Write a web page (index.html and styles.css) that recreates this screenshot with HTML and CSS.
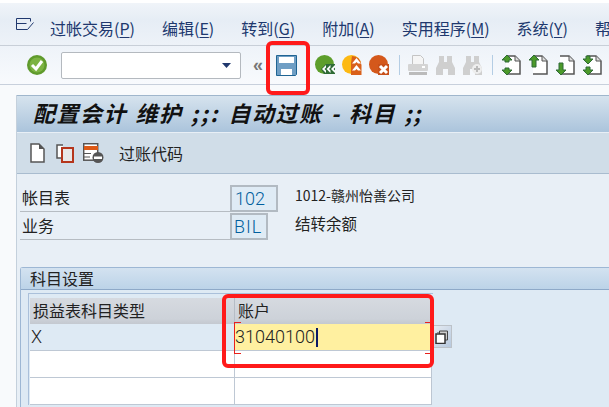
FILE: index.html
```html
<!DOCTYPE html>
<html lang="zh">
<head>
<meta charset="utf-8">
<title>配置会计 维护</title>
<link rel="stylesheet" href="styles.css">
</head>
<body>
<div class="page">
  <nav class="menubar">
    <svg class="menu-icon" width="18" height="13" viewBox="0 0 18 13"><path d="M.5.500h14v3M.5.500v11h6M.5 5.500h10M17.500 4.500l-6 7H6" fill="none" stroke="#20386e" stroke-width="1"/></svg>
    <span class="mi m1">过帐交易(<u>P</u>)</span>
    <span class="mi">编辑(<u>E</u>)</span>
    <span class="mi">转到(<u>G</u>)</span>
    <span class="mi">附加(<u>A</u>)</span>
    <span class="mi">实用程序(<u>M</u>)</span>
    <span class="mi">系统(<u>Y</u>)</span>
    <span class="mi">帮</span>
  </nav>
  <div class="toolbar">
    <svg class="ic ok" width="20" height="20" viewBox="0 0 20 20"><circle cx="10" cy="10" r="10" fill="#5f9a2c"/><circle cx="10" cy="10" r="7.500" fill="#7cb342"/><path d="M5 10l4 4 6-8" fill="none" stroke="#fff" stroke-width="3"/></svg>
    <div class="cmd"><svg width="9" height="5" viewBox="0 0 9 5"><path d="M0 0h9L4.500 5z" fill="#20386e"/></svg></div>
    <span class="chev">«</span>
    <svg class="ic save" width="21" height="21" viewBox="0 0 21 21"><path d="M.5.5h20v19l-1 1H.5z" fill="#6f9ec4" stroke="#1f6493"/><rect x="3" y="2" width="15" height="6" fill="#fff"/><rect x="5" y="14" width="11" height="6" fill="#fff"/></svg>
    <svg class="ic nav1" width="20" height="20" viewBox="0 0 20 20"><circle cx="9.500" cy="9.500" r="9.500" fill="#5d9e2b"/><path d="M6 14l5-5h9v10H9z" fill="#2f6b36"/><path d="M7 14l4-4v2.500L9.500 14l1.500 1.500V18zM11.500 14l4-4v2.500L14 14l1.500 1.500V18zM16 14l4-4v2.500L18.500 14l1.500 1.500V18z" fill="#fff"/></svg>
    <svg class="ic nav2" width="20" height="20" viewBox="0 0 20 20"><circle cx="9.500" cy="9.500" r="9.500" fill="#fdb913"/><path d="M10 1a9.500 9.500 0 0 1 9.500 9V20H9V8z" fill="#d9601a"/><path d="M14.500 3l4.500 5.500h-3L14.500 7 13 8.500h-3zM14.500 10l4.500 5.500h-3L14.500 14 13 15.500h-3z" fill="#fff"/></svg>
    <svg class="ic nav3" width="20" height="20" viewBox="0 0 20 20"><circle cx="9.500" cy="9.500" r="9.500" fill="#d4581b"/><path d="M9 9h11v11H9z" fill="#c8501a"/><path d="M11 11l7 7M18 11l-7 7" stroke="#fff" stroke-width="3"/></svg>
    <i class="sep s1"></i>
    <svg class="ic print" width="20" height="20" viewBox="0 0 20 20"><path d="M4.500.500h8l3 3v6h-11z" fill="#f5f5f5" stroke="#c4c4c4"/><rect y="9" width="20" height="7" rx="1" fill="#d4d4d4"/><rect x="14" y="11" width="3" height="2" fill="#fff"/><rect x="1" y="17" width="18" height="3" fill="#bbb"/></svg>
    <svg class="ic find" width="19" height="20" viewBox="0 0 19 20"><path d="M3 1h5v6h3V1h5v6l3 6v7h-7v-6H7v6H0v-7l3-6z" fill="#cfcfcf"/></svg>
    <svg class="ic find2" width="19" height="20" viewBox="0 0 19 20"><path d="M3 1h5v6h3V1h5v6l3 6v7h-7v-6H7v6H0v-7l3-6z" fill="#cfcfcf"/><circle cx="14" cy="14" r="5" fill="#eee"/><path d="M14 11v6M11 14h6" stroke="#bbb" stroke-width="2"/></svg>
    <i class="sep s2"></i>
    <svg class="ic pg1" width="20" height="20" viewBox="0 0 20 20"><use href="#doc"/><path d="M6 0l5 5H8v2H4V5H1zM6 20l5-5H8v-2H4v2H1z" fill="#4c9a2a" stroke="#2f6b36"/></svg>
    <svg class="ic pg2" width="20" height="20" viewBox="0 0 20 20"><use href="#doc"/><path d="M6 0l5 5H8v7H4V5H1z" fill="#4c9a2a" stroke="#2f6b36"/></svg>
    <svg class="ic pg3" width="20" height="20" viewBox="0 0 20 20"><use href="#doc"/><path d="M6 20l5-5H8V8H4v7H1z" fill="#4c9a2a" stroke="#2f6b36"/></svg>
    <svg class="ic pg4" width="20" height="20" viewBox="0 0 20 20"><use href="#doc"/><path d="M6 9l5-5H8V1H4v3H1zM6 20l5-5H8v-3H4v3H1z" fill="#4c9a2a" stroke="#2f6b36"/></svg>
    <svg width="0" height="0" class="defs"><defs><g id="doc"><path d="M5 1h9l5 5v13H5" fill="#fff" stroke="#555" stroke-width="1.500"/><path d="M14 1v5h5" fill="#ddd" stroke="#555"/></g></defs></svg>
  </div>
  <main class="panel">
    <h1 class="title">配置会计 维护 <span class="semi">;;:</span> 自动过账 - 科目 ;;</h1>
    <div class="apptools">
      <svg class="doc" width="15" height="20" viewBox="0 0 15 20"><path d="M1 1h8l5 5v13H1z" fill="#fff" stroke="#555" stroke-width="1.500"/><path d="M9 1v5h5" fill="#555"/></svg>
      <svg class="copy" width="18" height="19" viewBox="0 0 18 19"><path d="M7 1H1v13h4" fill="#fff" stroke="#555" stroke-width="1.500"/><rect x="6" y="4" width="11" height="14" fill="#e8e8e8" stroke="#b5361c" stroke-width="2"/></svg>
      <svg class="del" width="21" height="20" viewBox="0 0 21 20"><rect x=".7" y=".7" width="14" height="16.500" fill="#fff" stroke="#555" stroke-width="1.500"/><rect x="1" y="3" width="14" height="4" fill="#dd5a17"/><path d="M1 10.500h7M1 14h6" stroke="#555"/><circle cx="15" cy="14.500" r="5.500" fill="#555"/><rect x="11" y="13.500" width="8" height="2.500" fill="#fff"/></svg>
      <span class="tool-text">过账代码</span>
    </div>
    <section class="fields">
      <div class="frow">
        <label class="flabel">帐目表</label>
        <span class="box wide">102</span>
        <span class="fval small">1012-赣州怡善公司</span>
      </div>
      <div class="frow">
        <label class="flabel">业务</label>
        <span class="box">BIL</span>
        <span class="fval">结转余额</span>
      </div>
    </section>
    <section class="group">
      <h2 class="ghead">科目设置</h2>
      <div class="gbody">
        <div class="tablewrap">
          <div class="table">
            <div class="thead"><span class="c1">损益表科目类型</span><span class="c2">账户</span></div>
            <div class="tr active"><span class="c1 x">X</span><span class="c2 yellow">31040100<i class="caret"></i></span></div>
            <div class="tr"><span class="c1"></span><span class="c2"></span></div>
            <div class="tr"><span class="c1"></span><span class="c2"></span></div>
          </div>
          <div class="f4"><svg width="13" height="14" viewBox="0 0 13 14"><path d="M4.500 4V1h8v9H9" fill="#ccc" stroke="#444"/><path d="M3 3V2" stroke="#444"/><rect x="1" y="4" width="9" height="9.500" fill="#fff" stroke="#333" stroke-width="1.500"/></svg></div>
        </div>
      </div>
    </section>
  </main>
  <div class="mark mark-save"></div>
  <div class="mark mark-acct"></div>
</div>
</body>
</html>
```
FILE: styles.css
```css
* { box-sizing: border-box; }
html, body { margin: 0; padding: 0; }
body {
  width: 609px; height: 407px; overflow: hidden;
  font-family: "Noto Sans CJK SC", "Liberation Sans", sans-serif;
  color: #222;
  background: #f8fafc;
}
.page { position: relative; width: 609px; height: 407px; overflow: hidden; }
u { text-underline-offset: 2px; }

.menubar {
  height: 46px; display: flex; align-items: flex-start; gap: 27px;
  padding: 14px 0 0 16px;
  border-top: 3px solid #fff;
  border-bottom: 1px solid #c8cfd8;
  background: linear-gradient(#f0f4f9, #e6edf5 40%, #edf2f8);
  color: #20386e; font-size: 16px; line-height: 22px;
  white-space: nowrap; overflow: hidden;
}
.menu-icon { flex: none; margin-top: 1px; }
.mi { flex: none; }
.m1 { margin-left: -11px; }

.toolbar {
  height: 39px; display: flex; align-items: center;
  padding-left: 27px;
  border-bottom: 1px solid #c8d0dc;
  background: linear-gradient(#eef3f9, #f8fafd);
}
.defs { position: absolute; }
.ic { flex: none; display: block; }
.ok { margin-right: 14px; }
.cmd {
  flex: none; width: 180px; height: 27px; background: #fff;
  border: 1px solid #b4b9bf; border-radius: 2px;
  display: flex; align-items: center; justify-content: flex-end; padding-right: 9px;
}
.chev { flex: none; width: 14px; margin-left: 12px; color: #777; font: bold 18px/18px "Liberation Sans", sans-serif; }
.save { margin-left: 9px; }
.nav1 { margin-left: 18px; }
.nav2 { margin-left: 7px; }
.nav3 { margin-left: 7px; }
.sep { flex: none; width: 1px; height: 20px; background: #b4cde4; }
.s1 { margin-left: 10px; }
.print { margin-left: 8px; }
.find { margin-left: 8px; }
.find2 { margin-left: 8px; }
.s2 { margin-left: 10px; }
.pg1 { margin-left: 8px; }
.pg2 { margin-left: 7px; }
.pg3 { margin-left: 7px; }
.pg4 { margin-left: 7px; }

.panel {
  position: absolute; left: 16px; top: 95px; width: 593px; height: 312px;
  background: #e8eff6;
  border-left: 1px solid #c4d0dc;
}
.title {
  margin: 0; height: 37px; padding-left: 16px;
  background: linear-gradient(#d6e3ee, #abc4dc);
  border-top: 1px solid #9fb6cc;
  font-size: 22px; line-height: 33px; font-weight: 700; font-style: italic;
  letter-spacing: 1.500px; word-spacing: 2px;
  color: #111; white-space: nowrap;
}
.semi { letter-spacing: 2.500px; }
.apptools {
  height: 41px; margin-top: 1px; display: flex; align-items: center;
  padding-left: 13px;
  background: #d0dde8;
  border-bottom: 1px solid #a9bccf;
}
.doc, .copy, .del { flex: none; }
.copy { margin-left: 11px; }
.del { margin-left: 9px; }
.tool-text { margin-left: 15px; font-size: 16px; color: #222; }

.fields { padding: 10px 0 0 3px; }
.frow {
  position: relative; height: 28px; display: flex; align-items: center;
  font-size: 16px;
}
.flabel {
  width: 210px; height: 27px; line-height: 25px;
  padding-left: 2px; border-bottom: 1px solid #b6bcc2;
  flex: none;
}
.box {
  flex: none; width: 38px; height: 27px;
  border: 2px solid #b2bac2; background: #dfebf5;
  color: #005f9e; font: 300 18px/23px Roboto, "Liberation Sans", sans-serif; letter-spacing: 1px;
  padding-left: 2px;
}
.box.wide { width: 48px; padding-left: 3px; letter-spacing: 0; }
.fval { position: absolute; left: 275px; top: -2px; line-height: 26px; font-size: 15.500px; color: #222; }
.fval.small { font-size: 14px; }

.group {
  margin: 27px 0 0 3px; border: 1px solid #9db7d4; border-right: 0; border-bottom: 0;
  border-radius: 3px 0 0 0;
}
.ghead {
  margin: 0; height: 22px; padding-left: 9px;
  background: linear-gradient(#d3e2f0, #bcd3e8);
  border-bottom: 1px solid #8ea9c8;
  font-size: 16px; line-height: 20px; font-weight: 400; color: #222;
}
.gbody { height: 120px; background: #deeaf4; padding: 3px 0 0 7px; }
.tablewrap { position: relative; width: 405px; border: 1px solid #aac0da; border-bottom: 0; border-right: 0; padding: 4px 0 0 1px; }
.table { width: 402px; border-right: 1px solid #bcc6d2; }
.thead {
  display: flex; height: 26px;
  background: linear-gradient(#d6dae0, #cdd2d9 80%, #c4c9d0);
  font-size: 16px; line-height: 25px; color: #222;
}
.thead .c1 { width: 205px; padding-left: 3px; border-right: 1px solid #b6bdc6; }
.thead .c2 { padding-left: 3px; }
.tr { display: flex; height: 27px; background: #fff; border-bottom: 1px solid #bec8d4; }
.tr .c1 { width: 205px; border-right: 1px solid #bec8d4; }
.tr .c2 { flex: 1; }
.tr.active { background: #deeaf4; }
.x { font: 300 18px/26px Roboto, "Liberation Sans", sans-serif; padding-left: 1px; color: #222; }
.yellow {
  position: relative;
  background: #fff0a0; font: 300 18px/26px Roboto, "Liberation Sans", sans-serif; color: #222;
  display: block; height: 26px;
}
.yellow::before, .yellow::after {
  content: ""; position: absolute; top: -2px; width: 6px; height: 30px;
  border: 1px solid #e8201c; border-width: 1px 0;
}
.yellow::before { left: -1px; border-left-width: 1px; }
.yellow::after { right: 0; }
.caret { display: inline-block; width: 2px; height: 19px; background: #0a1a66; vertical-align: -4px; margin-left: 1px; }
.f4 {
  position: absolute; left: 403px; top: 31px; width: 20px; height: 23px;
  background: linear-gradient(135deg, #e8edf3, #b7c9de);
  border: 1px solid #bcc2c8; border-left: 0;
  display: flex; align-items: center; justify-content: center;
}

.mark { position: absolute; border: 4px solid #ff1a1a; border-radius: 6px; }
.mark-save { left: 266px; top: 41px; width: 44px; height: 54px; }
.mark-acct { left: 222px; top: 294px; width: 212px; height: 74px; }
```
